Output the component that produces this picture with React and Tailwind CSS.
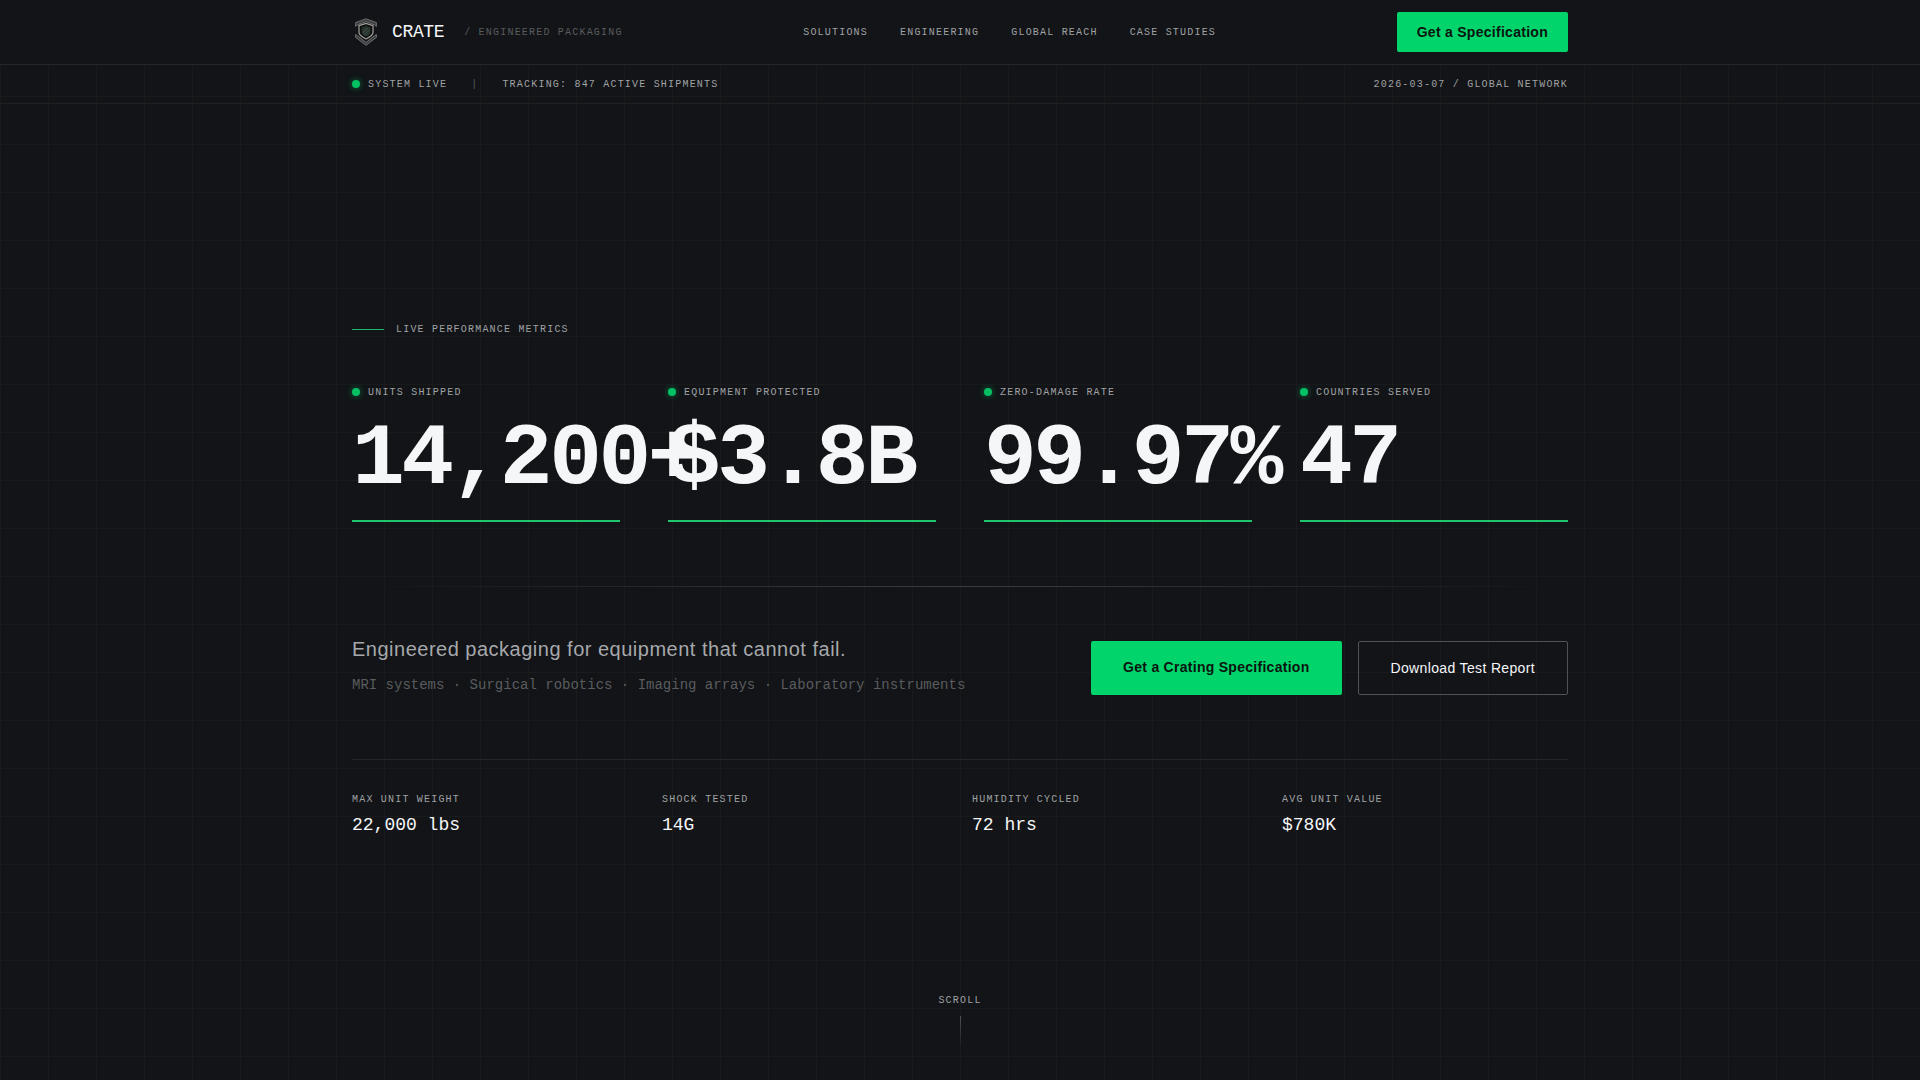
const navLinks = ['Solutions', 'Engineering', 'Global Reach', 'Case Studies']

const metrics = [
  { label: 'Units Shipped', value: '14,200+' },
  { label: 'Equipment Protected', value: '$3.8B' },
  { label: 'Zero-Damage Rate', value: '99.97%' },
  { label: 'Countries Served', value: '47' },
]

const specs = [
  { label: 'Max Unit Weight', value: '22,000 lbs' },
  { label: 'Shock Tested', value: '14G' },
  { label: 'Humidity Cycled', value: '72 hrs' },
  { label: 'Avg Unit Value', value: '$780K' },
]

const Logo = () => (
  <svg viewBox="0 0 28 28" className="h-7 w-7" fill="none" aria-hidden="true">
    <path d="M3.6 8.4V4.6L14 .8l10.4 3.8v3.8l-2-1.6L14 3.6 5.6 6.8z" fill="#3c3e40" stroke="#7d7f81" strokeWidth="0.8" />
    <path d="M7 7.6 14 5.4l7 2.2v6.9c0 2.8-3.2 4.6-7 6.5-3.8-1.9-7-3.7-7-6.5z" fill="#0e1012" stroke="#a09e98" strokeWidth="1.2" />
    <path d="M9.6 9.5 14 8l4.4 1.5v5c0 1.7-2 2.8-4.4 4.1-2.4-1.3-4.4-2.4-4.4-4.1z" fill="#27332c" />
    <path d="m11 14.5 5-4.5M12.5 16.5l5-4.5" stroke="#46564c" strokeWidth="0.9" />
    <path d="M3.6 16.5 5.8 18 14 24.4 22.2 18l2.2-1.5v2.9L14 27.3 3.6 19.4z" fill="#3c3e40" stroke="#7d7f81" strokeWidth="0.8" />
  </svg>
)

const StatusDot = () => (
  <span className="h-2 w-2 shrink-0 rounded-full bg-[#05c063] shadow-[0_0_6px_rgba(0,214,107,0.5)]" />
)

const Label = ({ children, className = 'text-[#a0a2a4]' }) => (
  <span className={`text-[10px] leading-[15px] tracking-[0.12em] whitespace-nowrap uppercase ${className}`}>
    {children}
  </span>
)

const Header = () => (
  <header className="border-b border-[#25272a] bg-[#121417]">
    <div className="mx-auto flex h-16 max-w-7xl items-center justify-between px-8">
      <div className="flex items-center gap-5">
        <a href="#top" className="flex items-center gap-3">
          <Logo />
          <span className="text-lg tracking-[-0.02em] text-[#f5f6f8]">CRATE</span>
        </a>
        <Label className="text-[#5a5c5e]">/ Engineered Packaging</Label>
      </div>
      <nav className="flex gap-8">
        {navLinks.map((link) => (
          <a key={link} href="#top" className="flex hover:text-white">
            <Label>{link}</Label>
          </a>
        ))}
      </nav>
      <a
        href="#specification"
        className="rounded-xs bg-[#00d46a] px-5 py-2.5 font-['Liberation_Sans',sans-serif] text-sm font-bold tracking-[0.02em] text-[#0b1410]"
      >
        Get a Specification
      </a>
    </div>
  </header>
)

const StatusBar = () => (
  <div className="border-b border-[#1f2123]">
    <div className="mx-auto flex h-[38px] max-w-7xl items-center justify-between px-8">
      <div className="flex items-center gap-6">
        <div className="flex items-center gap-2">
          <StatusDot />
          <Label>System Live</Label>
        </div>
        <Label className="text-[#5a5c5e]">|</Label>
        <Label>Tracking: 847 Active Shipments</Label>
      </div>
      <Label>2026-03-07 / Global Network</Label>
    </div>
  </div>
)

const App = () => {
  return (
    <div
      id="top"
      className="flex min-h-screen flex-col bg-[#121417] bg-[linear-gradient(rgba(255,255,255,0.024)_1px,transparent_1px),linear-gradient(90deg,rgba(255,255,255,0.024)_1px,transparent_1px)] bg-size-[48px_48px] font-['Liberation_Mono',monospace]"
    >
      <Header />
      <StatusBar />

      <main className="mx-auto flex w-full max-w-7xl flex-1 flex-col justify-center px-8 pt-[63px]">
        <div className="mb-12 flex items-center gap-3">
          <span className="h-px w-8 bg-[#1fb866]" />
          <Label>Live Performance Metrics</Label>
        </div>

        <div className="grid grid-cols-4 gap-12">
          {metrics.map((metric) => (
            <div key={metric.label} className="min-w-0">
              <div className="mb-4 flex items-center gap-2">
                <StatusDot />
                <Label>{metric.label}</Label>
              </div>
              <div className="text-[88px] leading-none font-bold tracking-[-0.04em] whitespace-nowrap text-[#f5f6f8]">
                {metric.value}
              </div>
              <div className="mt-4 h-0.5 bg-[#1fc66c]" />
            </div>
          ))}
        </div>

        <div className="mt-16 mb-12 h-px bg-linear-to-r from-transparent via-[#3a3c3f] to-transparent" />

        <div className="flex items-end justify-between gap-8">
          <div>
            <p className="mb-3 font-['Liberation_Sans',sans-serif] text-xl leading-7 tracking-wide text-[#a6a8ab]">
              Engineered packaging for equipment that cannot fail.
            </p>
            <p className="text-sm text-[#5a5c5e]">
              MRI systems · Surgical robotics · Imaging arrays · Laboratory instruments
            </p>
          </div>
          <div className="flex shrink-0 gap-4 font-['Liberation_Sans',sans-serif] text-sm">
            <a
              href="#specification"
              className="rounded-xs bg-[#00d46a] px-8 py-4 font-bold tracking-[0.02em] text-[#0b1410]"
            >
              Get a Crating Specification
            </a>
            <a
              href="#report"
              className="rounded-xs border border-[#505255] px-8 py-4 tracking-wide text-[#f5f6f8]"
            >
              Download Test Report
            </a>
          </div>
        </div>

        <dl className="mt-16 grid grid-cols-4 gap-6 border-t border-[#232528] pt-8">
          {specs.map((spec) => (
            <div key={spec.label}>
              <dt className="flex">
                <Label>{spec.label}</Label>
              </dt>
              <dd className="mt-1 text-lg leading-7 text-[#f5f6f8]">{spec.value}</dd>
            </div>
          ))}
        </dl>
      </main>

      <div className="flex flex-col items-center gap-2 pb-8">
        <Label>Scroll</Label>
        <span className="h-8 w-px bg-linear-to-b from-[#505255] to-transparent" />
      </div>
    </div>
  )
}

export default App
